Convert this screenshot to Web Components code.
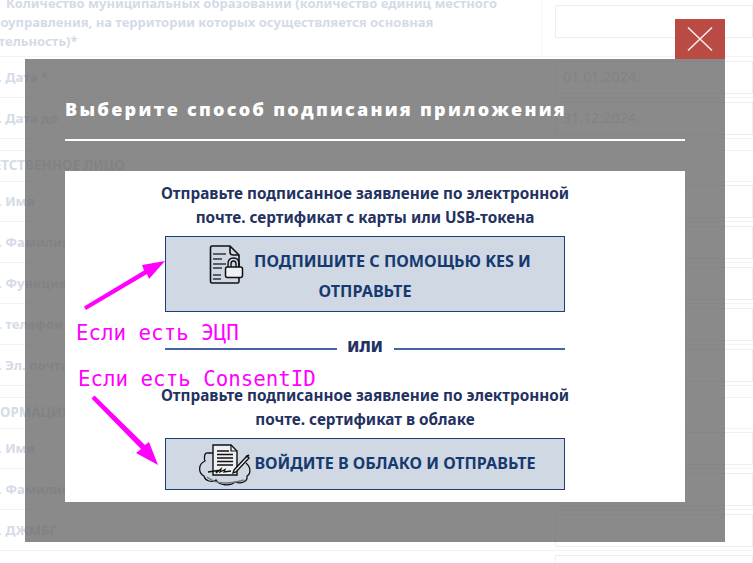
<!DOCTYPE html>
<html lang="ru"><head><meta charset="utf-8"><title>Подпись</title>
<style>
html,body{margin:0;padding:0;background:#fff}
body{width:753px;height:563px;overflow:hidden;position:relative;font-family:"Noto Sans","Open Sans",sans-serif}
</style></head><body>
<form-page>
  <form-row first><span>1.1.&nbsp; Количество муниципальных образований (количество единиц местного<br>самоуправления, на территории которых осуществляется основная<br>деятельность)*</span></form-row>
  <form-row value="01.01.2024."><span>1. Дата *</span></form-row>
  <form-row value="31.12.2024."><span>2. Дата до</span></form-row>
  <form-head>ОТВЕТСТВЕННОЕ ЛИЦО</form-head>
  <form-row><span>1. Имя</span></form-row>
  <form-row><span>2. Фамилия</span></form-row>
  <form-row><span>3. Функция</span></form-row>
  <form-row><span>4. телефон</span></form-row>
  <form-row><span>5. Эл. почта</span></form-row>
  <form-head>ИНФОРМАЦИЯ</form-head>
  <form-row><span>1. Имя</span></form-row>
  <form-row><span>2. Фамилия</span></form-row>
  <form-row><span>3. ДЖМБГ</span></form-row>
  <form-row><span></span></form-row>
</form-page>
<sign-modal title-text="Выберите способ подписания приложения">
  <sign-option kind="kes" tall><span slot="intro">Отправьте подписанное заявление по электронной<br>почте. сертификат с карты или USB-токена</span>ПОДПИШИТЕ С ПОМОЩЬЮ KES И ОТПРАВЬТЕ</sign-option>
  <or-divider>ИЛИ</or-divider>
  <sign-option kind="cloud"><span slot="intro">Отправьте подписанное заявление по электронной<br>почте. сертификат в облаке</span>ВОЙДИТЕ В ОБЛАКО И ОТПРАВЬТЕ</sign-option>
</sign-modal>
<note-layer></note-layer>
<script>
function def(name, html, init){
  customElements.define(name, class extends HTMLElement{
    constructor(){super();this.attachShadow({mode:'open'}).innerHTML=html;}
    connectedCallback(){ if(init) init(this,this.shadowRoot); }
  });
}
def('form-page',`<style>:host{display:block;height:563px;overflow:hidden;margin-left:-11px;width:764px;font:700 13.2px/19px "Noto Sans",sans-serif;color:#d4dbe7}</style><slot></slot>`);
def('form-row',`<style>
:host{display:grid;grid-template-columns:552px 1fr;height:40px;border-bottom:1px solid #f3f3f3;align-items:center}
:host([first]){height:56px;align-items:start}
:host([first]) .l{margin-top:-6px;margin-left:-17px;padding-left:3px;font-size:13px;text-indent:2px}
:host([first]) .r{border-left:1px solid #f6f6f6;height:56px;padding-left:13px;box-sizing:border-box;padding-top:5px}
.l{padding-left:1.5px;white-space:nowrap;font-size:13.2px}
.r{min-width:0}
.i{height:33px;box-sizing:border-box;border:1px solid #eee;margin-left:14px;font:400 14.3px/30px "Noto Sans",sans-serif;color:#dadada;padding-left:7px}
:host([first]) .i{margin-left:0}
</style><div class="l"><slot></slot></div><div class="r"><div class="i"></div></div>`,(el,s)=>{s.querySelector('.i').textContent=el.getAttribute('value')||'';});
def('form-head',`<style>:host{display:block;height:30px;margin-top:11px;margin-bottom:-1px;margin-left:-22px;border-top:1px solid #f3f3f3;border-bottom:1px solid #f3f3f3;font-size:13.4px;line-height:28px;color:#d4dbe7;white-space:nowrap}</style><slot></slot>`);
def('sign-modal',`<style>
:host{position:absolute;left:25px;top:59px;width:700px;height:483px;box-sizing:border-box;padding:0 40px;background:rgba(105,105,105,.78);display:block}
.x{position:absolute;right:0;top:-40px;width:50px;height:40px;background:#b94a44;display:flex;align-items:center;justify-content:center}
h2{margin:0;padding-top:37px;height:43px;font:800 18px/26px "Open Sans",sans-serif;letter-spacing:2.25px;color:#fff;white-space:nowrap}
hr{border:0;height:2px;background:#fff;margin:0}
.b{margin-top:30px;height:331px;background:#fff;padding:10px 120px 0 100px;box-sizing:border-box}
</style>
<div class="x"><svg width="26" height="26" viewBox="0 0 26 26" fill="none" stroke="#fbecea" stroke-width="1.6"><path d="M1 1.5L25 24.5M25 1.5L1 24.5"/></svg></div>
<h2></h2><hr><div class="b"><slot></slot></div>`,(el,s)=>{s.querySelector('h2').textContent=el.getAttribute('title-text');});
const ICONS={
kes:`<svg width="55" height="44" viewBox="1 0 55 44" fill="none" stroke="#111"><path d="M14 5H32L41 14V27" stroke-width="1.6"/><path d="M32 5.500V11Q32 14 35 14H41" stroke-width="1.6"/><path d="M14 5Q12.500 5 12.500 7V40Q12.500 42 14 42H40Q41 42 41 40V37" stroke-width="1.6"/><path d="M15 13H28M15 18H24M15 23H28M15 27H24M15 34H23M15 38H23" stroke-width="1.5" stroke="#333"/><path d="M30 26V23Q30 17 35.500 17Q41 17 41 23V26M33 26V23Q33 20 35.500 20Q38 20 38 23V26" stroke-width="1.4"/><rect x="27.500" y="26" width="17" height="10.500" rx="2" fill="#eef1f5" stroke-width="1.5"/></svg>`,
cloud:`<svg width="60" height="50" viewBox="-5 0 60 50" fill="none" stroke="#111"><path d="M14 13H9C5 12 5 19 6 21C-1 24-1 33 5 36C6 41 13 43 17 40C20 46 32 46 36 42C42 44 49 42 48 36C52 34 52 27 47 23" stroke-width="1.3"/><path d="M8 37C14 42 25 46 45 40" stroke="#777" stroke-width="1.6"/><path d="M14 5H32L38 11V35H14Z" fill="#eef0f3" stroke-width="1.4"/><path d="M32 5V11H38" stroke-width="1.2"/><path d="M18 11H30M18 14.500H34M18 18H34M18 21.500H34M18 25H34" stroke-width="1.4"/><path d="M9 32L19 30.500L17 33L22 29L21 32L26 29.500L25 32L32 31" stroke-width="1.3"/><path d="M35 30L48 16L50 18L37 32L34 33Z" fill="#eef0f3" stroke-width="1.4"/><path d="M47 17L50 15" stroke-width="2"/></svg>`};
def('sign-option',`<style>
:host{display:block;color:#24325f}
.t{font:700 15.3px/24px "Noto Sans",sans-serif;text-align:center;white-space:nowrap;height:48px;margin:0 -10px 7px}
.btn{display:block;box-sizing:border-box;width:400px;border:1px solid #1c3f77;background:#d0d8e3;color:#163a70;text-align:center;font:700 16.1px/30px "Noto Sans",sans-serif;height:52px;padding-top:9px}
:host([tall]) .btn{height:76px;font-size:16.2px}
.w{display:inline-block;vertical-align:middle;margin:-10px 0}
svg{display:block}
</style><div class="t"><slot name="intro"></slot></div><div class="btn"><span class="w"></span><slot></slot></div>`,(el,s)=>{s.querySelector('.w').innerHTML=ICONS[el.getAttribute('kind')];});
def('or-divider',`<style>
:host{display:flex;align-items:center;width:400px;height:66px;color:#24325f;font:700 15.3px/24px "Noto Sans",sans-serif;box-sizing:border-box;padding-top:2px;margin-bottom:5px}
i{flex:1;height:2px;background:#4a62a8;margin-top:5px}
b{width:57px;text-align:center}
</style><i></i><b><slot></slot></b><i></i>`);
def('note-layer',`<style>
:host{position:absolute;inset:0;display:block;pointer-events:none}
span{position:absolute;font:400 20.8px/26px "DejaVu Sans Mono",monospace;color:#ff00ff;white-space:nowrap}
svg{position:absolute;left:0;top:0}
</style>
<span style="left:76px;top:320px">Если есть ЭЦП</span>
<span style="left:78px;top:366px">Если есть ConsentID</span>
<svg width="753" height="563" fill="#ff00ff" stroke="none"><path d="M84 306.500L144 270.500L142 265L165 261L149 279L147 274L86 310Z"/><path d="M91.500 398.500L94.500 395.500L145 445L149 442L158 465L136 453L141 449Z"/></svg>`);
</script>
</body></html>
